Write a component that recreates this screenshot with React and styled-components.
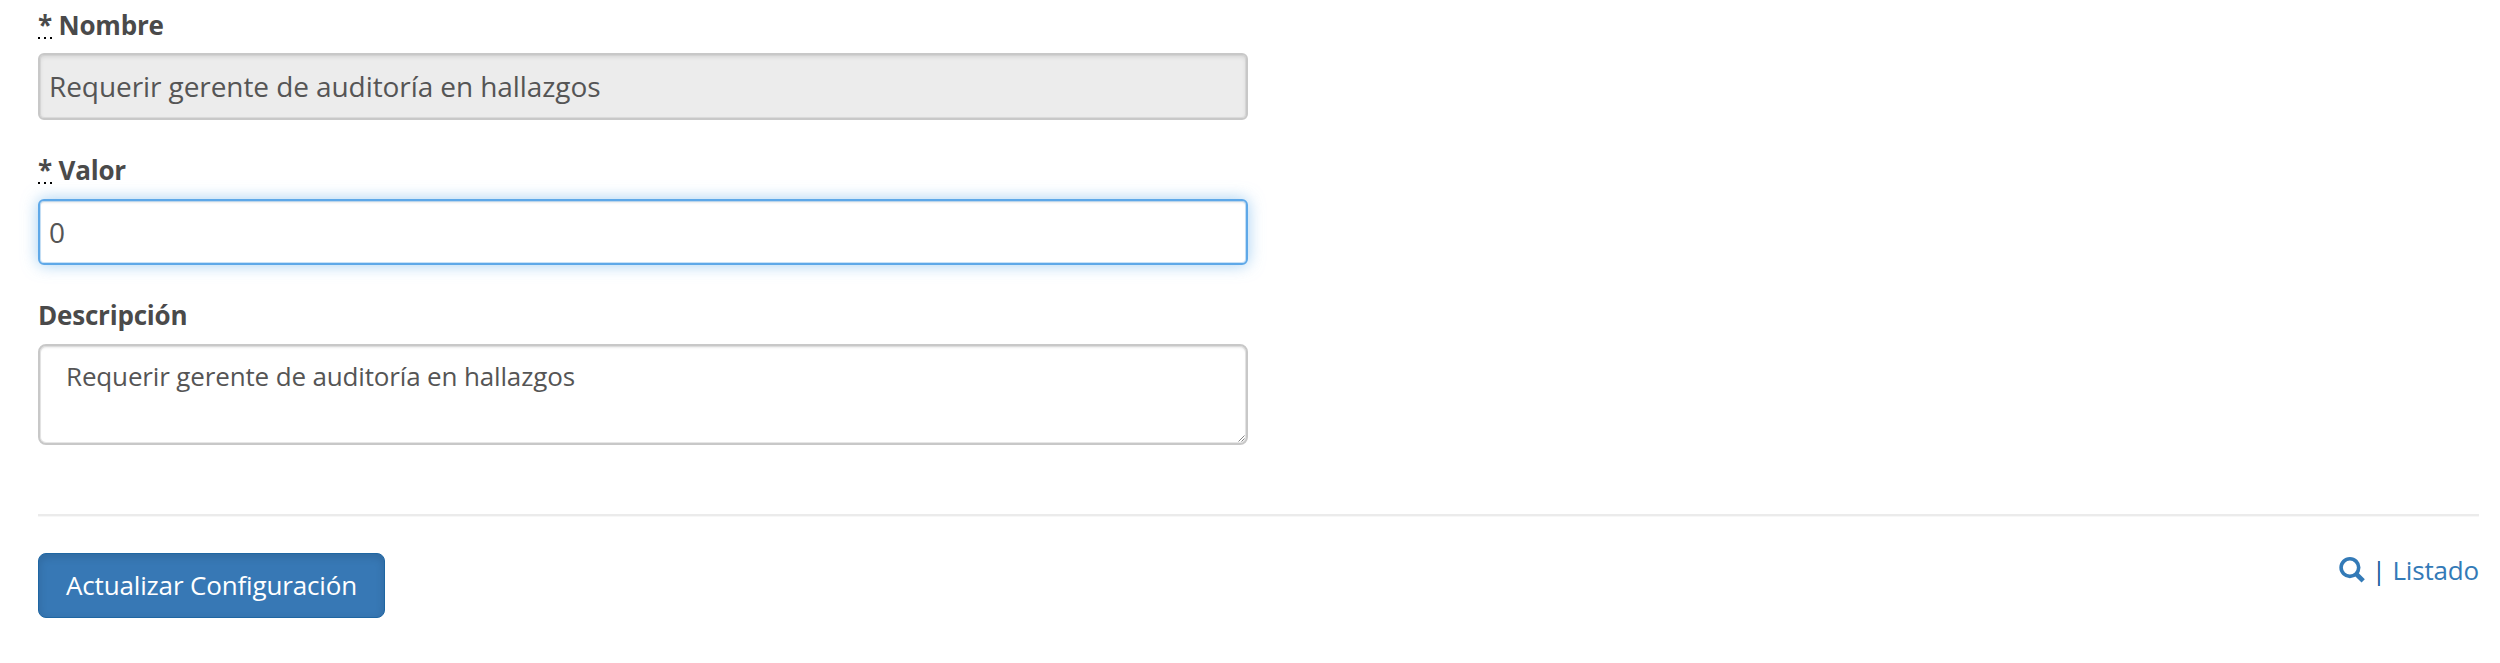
import React from 'react';
import styled, { createGlobalStyle, css } from 'styled-components';

const GlobalStyle = createGlobalStyle`
  *, *::before, *::after { box-sizing: border-box; }
  body {
    margin: 0;
    background: #fff;
    color: #4a4a4a;
    font-family: "Open Sans", sans-serif;
    font-size: 26px;
    line-height: 36px;
  }
`;

const Form = styled.form`
  display: flex;
  flex-direction: column;
  padding: 7px 21px 0 38px;
`;

const Fields = styled.div`
  display: flex;
  flex-direction: column;
  width: 1210px;
`;

const Field = styled.div`
  display: flex;
  flex-direction: column;
  height: ${({ $height }) => $height}px;
`;

const Label = styled.label`
  height: 36px;
  margin-bottom: ${({ $gap = 11 }) => $gap}px;
  font-weight: 700;
  letter-spacing: -0.2px;
`;

const Required = styled.abbr`
  text-decoration: none;
  display: inline-block;
  height: 32px;
  line-height: 36px;
  vertical-align: top;
  background: repeating-linear-gradient(90deg, #000 0 2px, transparent 2px 6px) left bottom / 100% 2px no-repeat;
`;

const control = css`
  display: block;
  width: 100%;
  margin: 0;
  border: 2px solid #c8c8c8;
  background: #fff;
  color: #555;
  font-family: inherit;
  outline: none;
  box-shadow: inset 0 0 0 1px rgba(200, 200, 200, 0.45), inset 0 2px 2px rgba(0, 0, 0, 0.075);
`;

const Input = styled.input`
  ${control}
  height: ${({ $height }) => $height}px;
  padding: 0 8px 1px 9px;
  border-radius: 6px;
  font-size: 28px;
  letter-spacing: -0.08px;

  &:read-only {
    background: #ececec;
    box-shadow: inset 0 0 0 1px rgba(200, 200, 200, 0.45), inset 0 2px 4px rgba(0, 0, 0, 0.1);
  }

  ${({ $active }) => $active && css`
    border-color: #5ea8e8;
    box-shadow: inset 0 0 0 1px rgba(94, 168, 232, 0.35), inset 0 2px 2px rgba(0, 0, 0, 0.075), 0 0 16px rgba(102, 175, 233, 0.6);
  `}
`;

const TextAreaFrame = styled.div`
  position: relative;
  height: 101px;
`;

const TextArea = styled.textarea`
  ${control}
  height: 101px;
  padding: 12px 26px;
  border-radius: 8px;
  font-size: 26px;
  line-height: 36px;
  letter-spacing: -0.15px;
  resize: none;
  overflow: hidden;
`;

const Grip = styled.svg`
  position: absolute;
  right: 3px;
  bottom: 3px;
  width: 7px;
  height: 7px;
`;

const Divider = styled.hr`
  width: 100%;
  height: 2px;
  margin: 69px 0 37px;
  border: 0;
  background: #ebebeb;
  box-shadow: 0 1px 0 #f7f7f7;
`;

const Actions = styled.div`
  display: flex;
  justify-content: space-between;
  align-items: flex-start;
`;

const SubmitButton = styled.button`
  width: 347px;
  height: 65px;
  padding: 0 0 2px;
  border: 1px solid #1f66a2;
  border-radius: 8px;
  background: #3778b5;
  box-shadow: inset 0 3px 8px rgba(0, 0, 0, 0.13);
  color: #fff;
  font: 26px/36px "Open Sans", sans-serif;
  letter-spacing: -0.15px;
`;

const Links = styled.nav`
  display: flex;
  margin-top: -1px;
  color: #337ab7;
`;

const Link = styled.a`
  color: #337ab7;
  letter-spacing: -0.18px;
  text-decoration: none;
`;

const SearchIcon = styled.svg`
  display: block;
  width: 26px;
  height: 26px;
  margin-top: 5px;
`;

const Separator = styled.span`
  width: 27px;
  text-align: center;
  color: #205f9b;
`;

export default function App() {
  return (
    <>
      <GlobalStyle />
      <Form onSubmit={(e) => e.preventDefault()}>
        <Fields>
          <Field $height={145}>
            <Label htmlFor="nombre" $gap={10}><Required title="Requerido">*</Required> Nombre</Label>
            <Input id="nombre" $height={67} readOnly defaultValue="Requerir gerente de auditoría en hallazgos" />
          </Field>
          <Field $height={145}>
            <Label htmlFor="valor"><Required title="Requerido">*</Required> Valor</Label>
            <Input id="valor" $height={66} $active defaultValue="0" />
          </Field>
          <Field $height={148}>
            <Label htmlFor="descripcion">Descripción</Label>
            <TextAreaFrame>
              <TextArea id="descripcion" defaultValue="Requerir gerente de auditoría en hallazgos" />
              <Grip viewBox="0 0 7 7" fill="none" stroke="#777" strokeWidth="0.9">
                <path d="M0.5 6.5 6.5 0.5M3.5 6.5 6.5 3.5" />
              </Grip>
            </TextAreaFrame>
          </Field>
        </Fields>
        <Divider />
        <Actions>
          <SubmitButton type="submit">Actualizar Configuración</SubmitButton>
          <Links>
            <Link href="#buscar" aria-label="Buscar">
              <SearchIcon viewBox="0 0 26 26" fill="none" stroke="#337ab7">
                <circle cx="10.9" cy="10.6" r="8.8" strokeWidth="3.6" />
                <path d="M17.2 17 24.2 23.9" strokeWidth="4.6" />
              </SearchIcon>
            </Link>
            <Separator>|</Separator>
            <Link href="#listado">Listado</Link>
          </Links>
        </Actions>
      </Form>
    </>
  );
}
